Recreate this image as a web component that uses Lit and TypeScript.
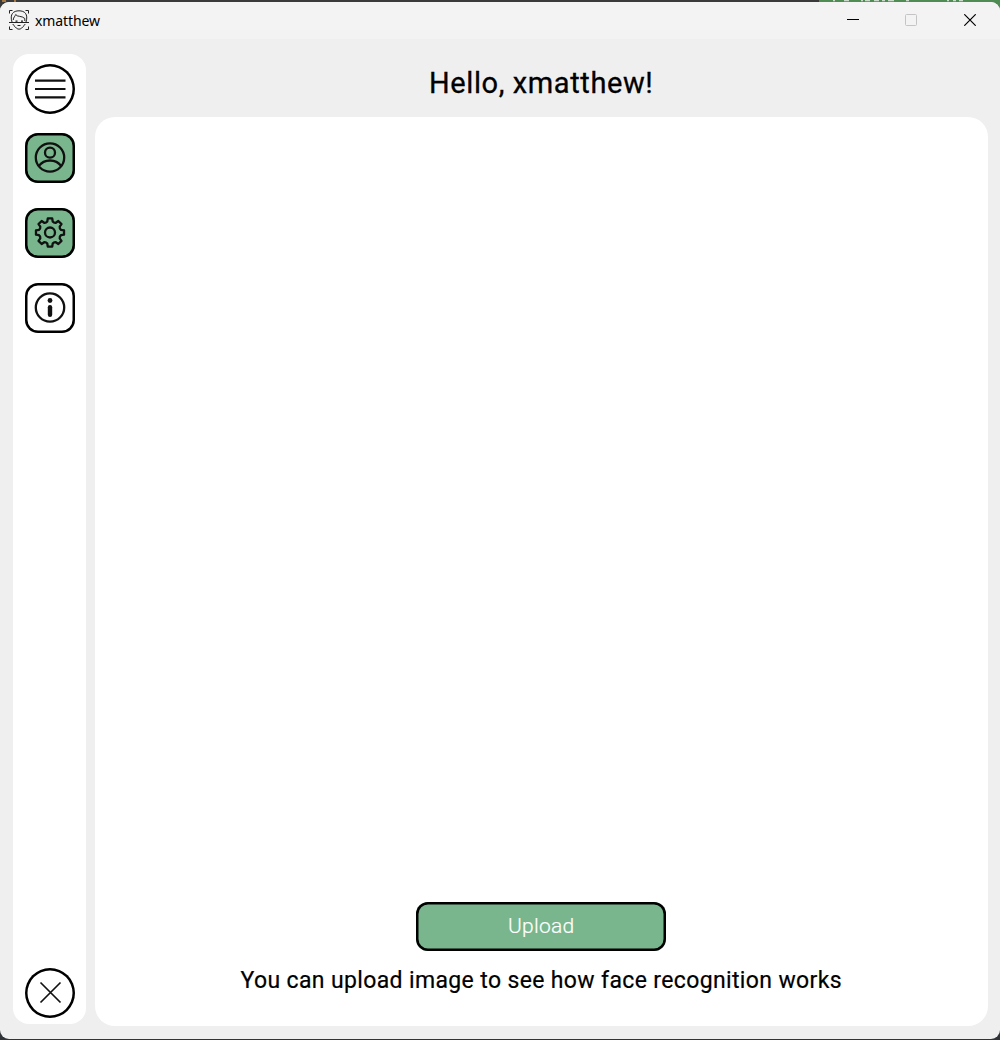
import { LitElement, html, css, svg } from "lit";
import { customElement } from "lit/decorators.js";

const gearPath = (() => {
  const p: string[] = [];
  const pt = (r: number, deg: number) => {
    const a = (deg * Math.PI) / 180;
    return `${(15.5 + r * Math.sin(a)).toFixed(2)} ${(15.5 - r * Math.cos(a)).toFixed(2)}`;
  };
  for (let i = 0; i < 8; i++) {
    const c = i * 45;
    p.push(`${i ? "L" : "M"}${pt(11.3, c - 14)}`, `L${pt(14.2, c - 9)}`, `L${pt(14.2, c + 9)}`, `L${pt(11.3, c + 14)}`);
    p.push(`Q${pt(10.2, c + 22.5)} ${pt(11.3, c + 31)}`);
  }
  return p.join("") + "Z";
})();

const icons = {
  menu: svg`<path d="M.5 7.700h30.500M.5 16h30.500M.5 24.300h30.500" stroke-width="2.200"/>`,
  user: svg`<circle cx="15.500" cy="15.500" r="14.200"/><circle cx="15.500" cy="10.700" r="5"/><path d="M4.200 24.200C7 20.300 11 18.500 15.500 18.500s8.500 1.800 11.300 5.700"/>`,
  gear: svg`<path d="${gearPath}" stroke-linejoin="round"/><circle cx="15.500" cy="15.500" r="5"/>`,
  info: svg`<circle cx="15.500" cy="15.500" r="14.200"/><circle cx="15.500" cy="8.500" r="2.400" fill="#111" stroke="none"/><path d="M15.500 15.300v7.500" stroke-width="4.400" stroke-linecap="round"/>`,
  close: svg`<path d="M6 5.500 26 25.500M26 5.500 6 25.500" stroke-width="1.700"/>`,
};

@customElement("app-root")
export class AppRoot extends LitElement {
  static styles = css`
    :host { display: block; width: 1000px; height: 1040px; overflow: hidden; color: #000; }
    * { box-sizing: border-box; }
    .desktop {
      height: 1040px; display: flex; flex-direction: column; padding: 2px 0 1px; position: relative;
      background: linear-gradient(90deg, #3a3a3a 819px, #4f8c54 819px) 0 0 / 100% 12px no-repeat, #303338;
    }
    .behind { position: absolute; left: 0; top: 0; display: block; }
    .window {
      flex: 1; min-height: 0; display: flex; flex-direction: column; position: relative;
      background: #efefef; border-radius: 9px; overflow: hidden;
    }
    .titlebar { height: 37px; flex: none; background: #f3f3f3; display: flex; align-items: center; padding: 0 0 1px 9px; }
    .logo { width: 20px; height: 20px; display: block; }
    .name { font: 14px/20px "Noto Sans", sans-serif; letter-spacing: -0.1px; margin-left: 6px; flex: 1; padding-top: 1px; }
    .controls { display: flex; gap: 46px; padding-right: 24px; }
    .controls svg { width: 12px; height: 12px; display: block; fill: none; }
    .controls svg:last-child { margin-left: 1px; }
    .content { flex: 1; min-height: 0; display: flex; gap: 9px; padding: 0 12.500px 13px 13px; }
    .sidebar {
      width: 73px; margin: 15px 0 2px; padding: 10px 0 6px; background: #fff; border-radius: 16px;
      display: flex; flex-direction: column; align-items: center;
    }
    .btn {
      width: 50px; height: 50px; border: 0; box-shadow: inset 0 0 0 2.500px #000; border-radius: 13px; padding: 0;
      background: #fff; display: flex; align-items: center; justify-content: center; flex: none; margin-bottom: 25px;
    }
    .btn svg { width: 32px; height: 32px; fill: none; stroke: #111; stroke-width: 2.300; flex: none; }
    .round { border-radius: 50%; margin-bottom: 19px; }
    .green { background: #79b68d; }
    .exit { margin: auto 0 0; }
    .main { flex: 1; min-width: 0; display: flex; flex-direction: column; }
    .hello {
      height: 78px; margin: 0; padding-top: 10px; display: flex; align-items: center; justify-content: center;
      font: 400 29px/34px Roboto, sans-serif; letter-spacing: 0.600px; -webkit-text-stroke: 0.300px #000;
    }
    .panel {
      flex: 1; background: #fff; border-radius: 20px; display: flex; flex-direction: column;
      align-items: center; justify-content: flex-end; padding-bottom: 31px;
    }
    .upload {
      width: 250px; height: 49px; border: 0; box-shadow: inset 0 0 0 2.500px #000; border-radius: 12px; color: #fff;
      padding: 0 0 2px; font: 300 21px/24px Roboto, sans-serif; letter-spacing: 0.300px;
      -webkit-text-stroke: 0.200px #fff;
    }
    .caption {
      margin: 16px 0 0; font: 400 23px/28px Roboto, sans-serif; letter-spacing: 0.360px; white-space: nowrap;
      -webkit-text-stroke: 0.200px #000;
    }
  `;

  render() {
    return html`
      <div class="desktop">
        <svg class="behind" width="1000" height="2" aria-hidden="true">
          <path d="M833 .5h2M844 .5h5M861 .5h2M865 .5h5M874 .5h5M882 .5h3M888 .5h6M906 .5h3M947 .5h2M953 .5h3M959 .5h4" stroke="#c9dcca" stroke-width="1.500"/>
          <path d="M2 1h4M14 1h2" stroke="#a87742" stroke-width="2"/>
        </svg>
        <div class="window">
          <header class="titlebar">
            <svg class="logo" viewBox="0 0 20 20" fill="none" stroke="#222" stroke-width="1">
              <path d="M.5 3.500v-3h3M16.500.5h3v3M.5 16.500v3h3M16.500 19.500h3v-3"/>
              <path d="M0 12.500h20" stroke-width="1.200"/>
              <path d="M3.800 14c.6 1.500 1.700 2 2.700 3.200 2 2.600 5 2.600 7 0 1-1.200 2.100-1.700 2.700-3.200M3 12C.5 4 4.500.800 10 .800S19.500 4 17 12M4.200 10c.3-3 2-3.700 2.500-5.500C8 7.200 13 5.500 15.800 8.500V11M8.500 15.500h3"/>
              <path d="M6.500 11.200h2M12 11.200h2" stroke-width="1.300"/>
            </svg>
            <span class="name">xmatthew</span>
            <div class="controls">
              <svg viewBox="0 0 12 12"><path d="M0 5.500h12" stroke="#000"/></svg>
              <svg viewBox="0 0 12 12"><rect x=".5" y=".5" width="11" height="11" rx="1" stroke="#c4c4c4"/></svg>
              <svg viewBox="0 0 12 12"><path d="M.3.300 11.700 11.700M11.700.3.300 11.700" stroke="#000" stroke-width="1.200"/></svg>
            </div>
          </header>
          <div class="content">
            <nav class="sidebar">
              <button class="btn round"><svg viewBox="-.5 0 32 32">${icons.menu}</svg></button>
              <button class="btn green"><svg viewBox="-.5 0 32 32">${icons.user}</svg></button>
              <button class="btn green"><svg viewBox="-.5 0 32 32">${icons.gear}</svg></button>
              <button class="btn"><svg viewBox="-.5 0 32 32">${icons.info}</svg></button>
              <button class="btn round exit"><svg viewBox="-.5 0 32 32">${icons.close}</svg></button>
            </nav>
            <main class="main">
              <h1 class="hello">Hello, xmatthew!</h1>
              <section class="panel">
                <button class="upload green">Upload</button>
                <p class="caption">You can upload image to see how face recognition works</p>
              </section>
            </main>
          </div>
        </div>
      </div>
    `;
  }
}
